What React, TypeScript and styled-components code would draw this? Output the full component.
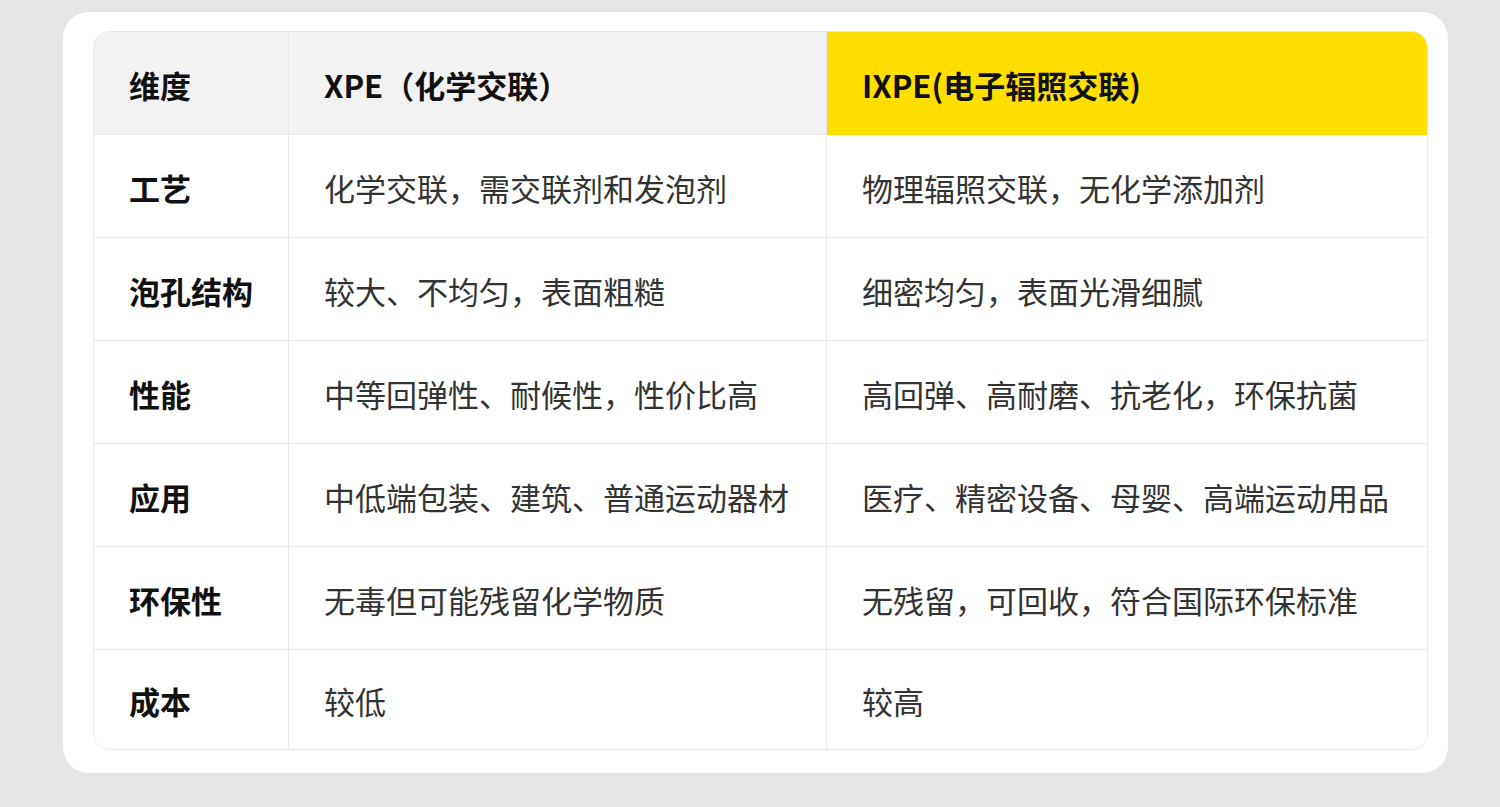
import React from "react";
import styled, { createGlobalStyle } from "styled-components";

const Global = createGlobalStyle`
  html, body {
    margin: 0;
    padding: 0;
    background: #e5e5e5;
  }
  body {
    font-family: "Noto Sans CJK SC", "Noto Sans", sans-serif;
  }
`;

const Page = styled.div`
  width: 1500px;
  height: 807px;
  padding: 12px 0 0 63px;
  box-sizing: border-box;
`;

const Card = styled.div`
  width: 1385px;
  height: 761px;
  box-sizing: border-box;
  background: #ffffff;
  border-radius: 26px;
  padding: 19px 20px 23px 30px;
`;

const Table = styled.div`
  display: grid;
  grid-template-columns: 195px 538px 1fr;
  grid-auto-rows: 103px;
  border: 1px solid #e9e9e9;
  border-radius: 16px;
  overflow: hidden;
  height: 719px;
  box-sizing: border-box;
  grid-template-rows: repeat(6, 103px) 1fr;
`;

const Cell = styled.div<{ $head?: boolean; $accent?: boolean; $bold?: boolean; $last?: boolean; $bottom?: boolean }>`
  display: flex;
  align-items: center;
  padding: 0 0 0 35px;
  font-size: 31px;
  line-height: 1;
  letter-spacing: 0;
  color: ${(p) => (p.$bold ? "#111111" : "#333333")};
  font-weight: ${(p) => (p.$bold ? 700 : 400)};
  background: ${(p) => (p.$accent ? "#ffdf00" : p.$head ? "#f2f2f2" : "#ffffff")};
  border-right: ${(p) => (p.$last ? "none" : p.$accent ? "none" : "1px solid #e9e9e9")};
  border-bottom: ${(p) => (p.$bottom ? "none" : p.$accent ? "1px solid #ffdf00" : "1px solid #e9e9e9")};
  white-space: nowrap;
  padding-top: 2px;
`;

const rows: [string, string, string][] = [
  ["工艺", "化学交联，需交联剂和发泡剂", "物理辐照交联，无化学添加剂"],
  ["泡孔结构", "较大、不均匀，表面粗糙", "细密均匀，表面光滑细腻"],
  ["性能", "中等回弹性、耐候性，性价比高", "高回弹、高耐磨、抗老化，环保抗菌"],
  ["应用", "中低端包装、建筑、普通运动器材", "医疗、精密设备、母婴、高端运动用品"],
  ["环保性", "无毒但可能残留化学物质", "无残留，可回收，符合国际环保标准"],
  ["成本", "较低", "较高"],
];

export default function App() {
  return (
    <>
      <Global />
      <Page>
        <Card>
          <Table>
            <Cell $head $bold>维度</Cell>
            <Cell $head $bold>XPE（化学交联）</Cell>
            <Cell $accent $bold $last>IXPE(电子辐照交联)</Cell>
            {rows.map((r, i) => {
              const bottom = i === rows.length - 1;
              return (
                <React.Fragment key={r[0]}>
                  <Cell $bold $bottom={bottom}>{r[0]}</Cell>
                  <Cell $bottom={bottom}>{r[1]}</Cell>
                  <Cell $last $bottom={bottom}>{r[2]}</Cell>
                </React.Fragment>
              );
            })}
          </Table>
        </Card>
      </Page>
    </>
  );
}
